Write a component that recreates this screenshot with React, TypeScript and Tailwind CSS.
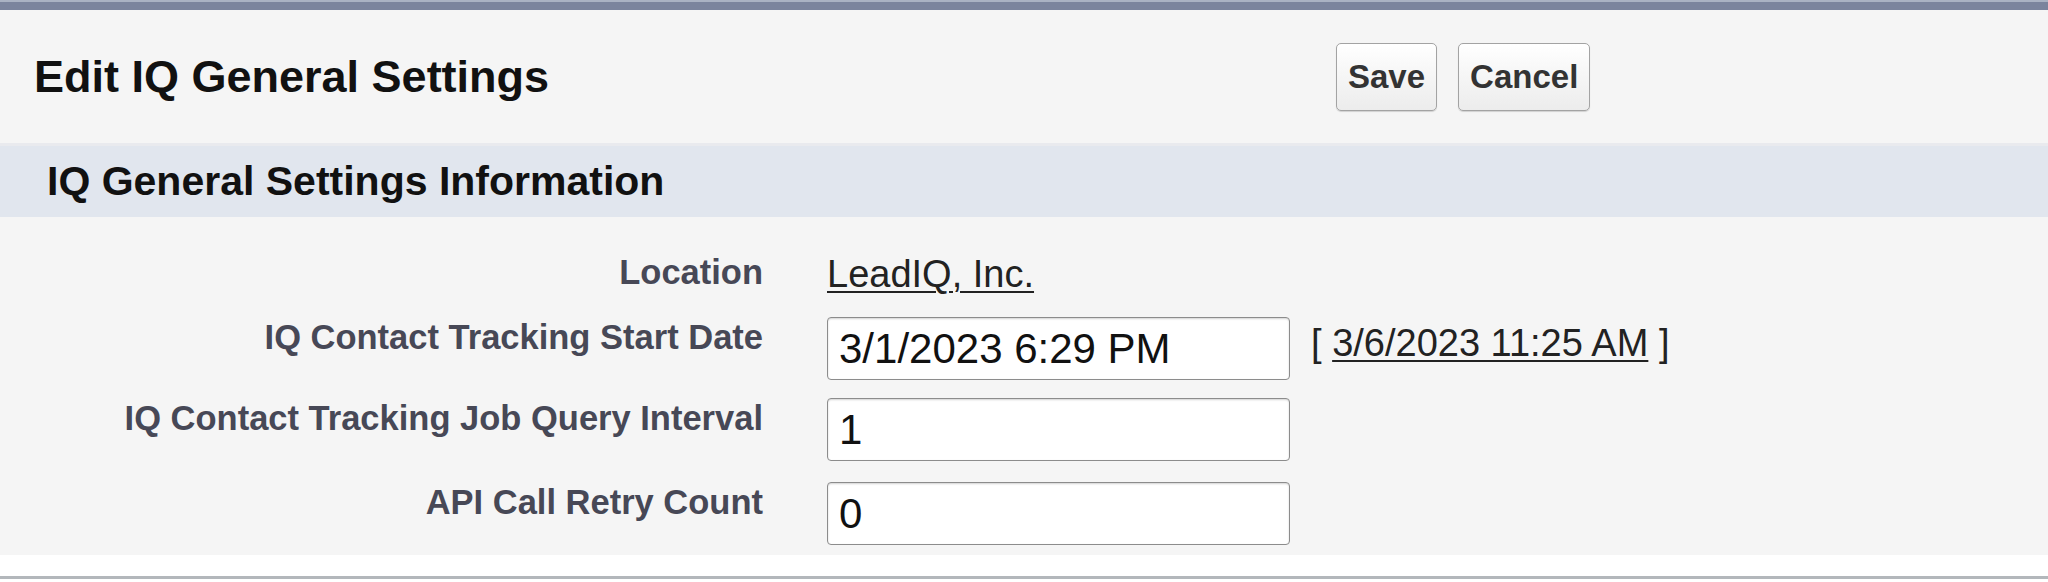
import type { ReactNode } from 'react'

const FONT = "font-['Liberation_Sans',Arial,Helvetica,sans-serif]"

function Field({ label, height, children }: { label: string; height: string; children: ReactNode }) {
  return (
    <div className={`flex items-start gap-[64px] ${height}`}>
      <div className="w-[763px] shrink-0 text-right text-[34.5px] leading-[40px] font-bold text-[#474856]">
        {label}
      </div>
      <div className="flex items-start gap-[21px]">{children}</div>
    </div>
  )
}

function TextBox({ value }: { value: string }) {
  return (
    <input
      readOnly
      value={value}
      className="h-[63px] w-[463px] rounded-[4px] border border-[#8c8c8c] bg-white pl-[11px] text-[42px] text-[#111] shadow-[inset_0_1px_2px_rgba(0,0,0,0.18)] outline-none"
    />
  )
}

export default function App() {
  return (
    <div className={`h-[582px] w-[2048px] overflow-hidden bg-white ${FONT}`}>
      <div className="h-[10px] border-t-2 border-[#aab2c3] bg-[#7b849d]" />

      <div className="flex h-[133px] items-center bg-[#f5f5f5] pl-[34px]">
        <h1 className="w-[1302px] shrink-0 text-[45px] font-bold text-[#111]">Edit IQ General Settings</h1>
        <div className="flex gap-[21px]">
          <button className="h-[68px] rounded-[5px] border border-[#a3a3a3] bg-gradient-to-b from-white to-[#ececec] px-[11px] text-[33px] font-bold text-[#333] shadow-[0_1px_1px_rgba(0,0,0,0.15)]">
            Save
          </button>
          <button className="h-[68px] rounded-[5px] border border-[#a3a3a3] bg-gradient-to-b from-white to-[#ececec] px-[11px] text-[33px] font-bold text-[#333] shadow-[0_1px_1px_rgba(0,0,0,0.15)]">
            Cancel
          </button>
        </div>
      </div>

      <div className="flex h-[74px] items-center border-t-[3px] border-[#e9eaee] bg-[#e1e6ee] pl-[47px]">
        <h2 className="text-[41px] font-bold text-[#111]">IQ General Settings Information</h2>
      </div>

      <div className="h-[338px] bg-[#f5f5f5] pt-[35px]">
        <Field label="Location" height="h-[65px]">
          <a className="mt-[2px] text-[38px] leading-[40px] text-[#222] underline decoration-2 underline-offset-4">
            LeadIQ, Inc.
          </a>
        </Field>
        <Field label="IQ Contact Tracking Start Date" height="h-[81px]">
          <TextBox value="3/1/2023 6:29 PM" />
          <span className="mt-[3px] text-[38px] leading-[46px] text-[#222]">
            [ <a className="underline decoration-2 underline-offset-4">3/6/2023 11:25 AM</a> ]
          </span>
        </Field>
        <Field label="IQ Contact Tracking Job Query Interval" height="h-[84px]">
          <TextBox value="1" />
        </Field>
        <Field label="API Call Retry Count" height="h-[73px]">
          <TextBox value="0" />
        </Field>
      </div>

      <div className="h-[24px] border-b-[3px] border-[#b3b7bb] bg-white" />
    </div>
  )
}
